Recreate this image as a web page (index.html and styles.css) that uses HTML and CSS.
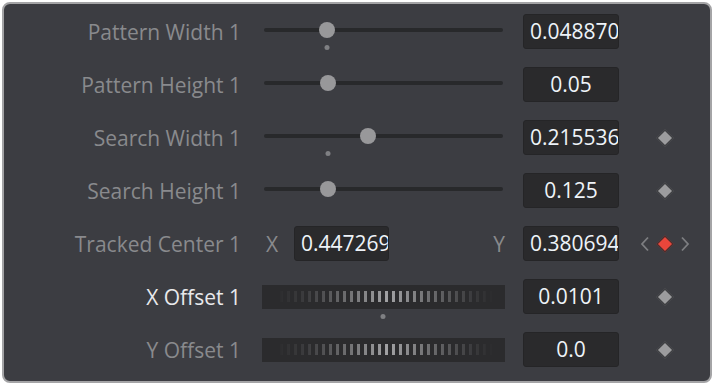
FILE: index.html
```html
<!DOCTYPE html>
<html>
<head>
    <title>Tracker Controls</title>
    <link rel="stylesheet" href="styles.css">
</head>
<body>
    <div class="panel">
        <!-- Pattern size -->
        <div class="row">
            <span class="label">Pattern Width 1</span>
            <div class="control">
                <div class="slider">
                    <span class="thumb" style="left: 63px"></span>
                    <span class="mark" style="left: 63px"></span>
                </div>
            </div>
            <div class="field">0.048870</div>
            <div class="keys"></div>
        </div>
        <div class="row">
            <span class="label">Pattern Height 1</span>
            <div class="control">
                <div class="slider">
                    <span class="thumb" style="left: 64px"></span>
                </div>
            </div>
            <div class="field">0.05</div>
            <div class="keys"></div>
        </div>

        <!-- Search size -->
        <div class="row">
            <span class="label">Search Width 1</span>
            <div class="control">
                <div class="slider">
                    <span class="thumb" style="left: 104px"></span>
                    <span class="mark" style="left: 64px"></span>
                </div>
            </div>
            <div class="field">0.215536</div>
            <div class="keys"><span class="diamond"></span></div>
        </div>
        <div class="row">
            <span class="label">Search Height 1</span>
            <div class="control">
                <div class="slider">
                    <span class="thumb" style="left: 64px"></span>
                </div>
            </div>
            <div class="field">0.125</div>
            <div class="keys"><span class="diamond"></span></div>
        </div>

        <!-- Tracked center -->
        <div class="row">
            <span class="label">Tracked Center 1</span>
            <div class="control pair">
                <span class="axis">X</span>
                <div class="field small">0.447269</div>
                <span class="axis axis-y">Y</span>
            </div>
            <div class="field">0.380694</div>
            <div class="keys">
                <svg class="chev" width="9" height="16" viewBox="0 0 9 16"><path d="M8 1.5 L2 8 L8 14.5" fill="none" stroke="#7d7e81" stroke-width="1.8"/></svg>
                <span class="diamond active"></span>
                <svg class="chev" width="9" height="16" viewBox="0 0 9 16"><path d="M1 1.5 L7 8 L1 14.5" fill="none" stroke="#7d7e81" stroke-width="1.8"/></svg>
            </div>
        </div>

        <!-- Offsets -->
        <div class="row">
            <span class="label bright">X Offset 1</span>
            <div class="control">
                <div class="wheel">
                    <div class="ticks"></div>
                    <span class="wheel-mark" style="left: 121px"></span>
                </div>
            </div>
            <div class="field">0.0101</div>
            <div class="keys"><span class="diamond"></span></div>
        </div>
        <div class="row">
            <span class="label">Y Offset 1</span>
            <div class="control">
                <div class="wheel">
                    <div class="ticks"></div>
                </div>
            </div>
            <div class="field">0.0</div>
            <div class="keys"><span class="diamond"></span></div>
        </div>
    </div>
</body>
</html>
```

FILE: styles.css
```css
body {
    margin: 0;
    padding: 0;
    background: #ffffff;
    font-family: 'Open Sans', 'DejaVu Sans', sans-serif;
}

/* Panel */
.panel {
    margin: 2px;
    width: 710px;
    height: 381px;
    box-sizing: border-box;
    border: 2px solid #a4a4a6;
    border-radius: 8px;
    background: #3c3d42;
    padding-top: 1px;
}

.row {
    display: flex;
    align-items: center;
    height: 53px;
}

.label {
    width: 237px;
    text-align: right;
    font-size: 21px;
    font-weight: 500;
    color: #898a8d;
    white-space: nowrap;
}
.label.bright {
    color: #e8e9ec;
}

.control {
    width: 243px;
    margin-left: 21px;
}

/* Slider */
.slider {
    position: relative;
    height: 4px;
    margin: 0 2px 3px 2px;
    background: #28292b;
    border-radius: 2px;
}
.thumb {
    position: absolute;
    top: 50%;
    width: 16px;
    height: 16px;
    border-radius: 50%;
    background: #98989a;
    transform: translate(-50%, -50%);
}
.mark {
    position: absolute;
    top: 17px;
    width: 5px;
    height: 5px;
    border-radius: 50%;
    background: #7f8083;
    transform: translateX(-50%);
}

/* Thumbwheel */
.wheel {
    position: relative;
    height: 24px;
    background: #2b2b2d;
    display: flex;
    align-items: center;
    padding: 0 4px;
}
.ticks {
    flex: 1;
    height: 11px;
    background: repeating-linear-gradient(90deg, #b0b0b2 0 3px, transparent 3px 7px);
    -webkit-mask-image: linear-gradient(90deg, transparent 4%, rgba(0,0,0,0.15) 18%, rgba(0,0,0,0.45) 32%, rgba(0,0,0,0.9) 52%, rgba(0,0,0,0.45) 72%, rgba(0,0,0,0.12) 88%, transparent 97%);
    mask-image: linear-gradient(90deg, transparent 4%, rgba(0,0,0,0.15) 18%, rgba(0,0,0,0.45) 32%, rgba(0,0,0,0.9) 52%, rgba(0,0,0,0.45) 72%, rgba(0,0,0,0.12) 88%, transparent 97%);
}
.wheel-mark {
    position: absolute;
    top: 29px;
    width: 5px;
    height: 5px;
    border-radius: 50%;
    background: #7f8083;
    transform: translateX(-50%);
}

/* Tracked center pair */
.control.pair {
    display: flex;
    align-items: center;
}
.axis {
    font-size: 21px;
    font-weight: 500;
    color: #898a8d;
    margin-left: 4px;
    width: 24px;
}
.axis-y {
    margin-left: auto;
    width: auto;
    margin-right: 0;
}

/* Value fields */
.field {
    width: 96px;
    height: 35px;
    margin-left: 18px;
    box-sizing: border-box;
    background: #2a2a2c;
    border: 1px solid #252527;
    border-radius: 3px;
    padding: 0 6px;
    overflow: hidden;
    white-space: nowrap;
    text-align: center;
    font-size: 21px;
    font-weight: 500;
    line-height: 33px;
    color: #eef3f8;
}
.field.small {
    width: 95px;
    margin-left: 4px;
}

/* Keyframe buttons */
.keys {
    width: 54px;
    margin-left: 19px;
    display: flex;
    align-items: center;
    justify-content: center;
    gap: 7px;
}
.diamond {
    width: 10px;
    height: 10px;
    margin: 3px;
    background: #9c9c9e;
    border: 1px solid #333437;
    transform: rotate(45deg);
}
.diamond.active {
    background: #e8463b;
    border-color: #3a2b2b;
}
.chev {
    display: block;
}
```
